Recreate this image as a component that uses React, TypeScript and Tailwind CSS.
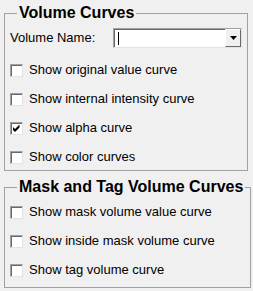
import { useState } from 'react';

const body = { fontFamily: '"Liberation Sans", Arial, sans-serif' };

function CheckRow({ label, checked, onToggle }: { label: string; checked: boolean; onToggle: () => void }) {
  return (
    <label className="flex items-center h-4 gap-[6px] cursor-default select-none" onClick={onToggle}>
      <span className="relative w-[13px] h-[13px] shrink-0 bg-white border border-t-[#a0a0a0] border-l-[#a0a0a0] border-r-[#e3e3e3] border-b-[#e3e3e3] shadow-[inset_1px_1px_0_#696969]">
        {checked && (
          <svg className="absolute left-[1px] top-[1px]" width="9" height="9" viewBox="0 0 9 9">
            <path d="M1 3 L3 5 L7.5 0.5 L7.5 3.5 L3 8 L1 6 Z" fill="#000" />
          </svg>
        )}
      </span>
      <span className="text-[13px] text-black leading-4">{label}</span>
    </label>
  );
}

export default function App() {
  const [checks, setChecks] = useState<Record<string, boolean>>({
    original: false,
    internal: false,
    alpha: true,
    color: false,
    mask: false,
    inside: false,
    tag: false,
  });
  const toggle = (k: string) => setChecks((c) => ({ ...c, [k]: !c[k] }));

  return (
    <div className="w-[253px] h-[291px] bg-[#f0f0f0] px-[4px] pt-[4px] flex flex-col gap-[7px]" style={body}>
      <fieldset className="w-[244px] border border-[#a0a0a0] px-[5px] pb-[5px]">
        <legend className="ml-[7px] px-[2px] text-[16px] leading-[18px] font-bold text-black whitespace-nowrap">Volume Curves</legend>
        <div className="flex items-center h-5 mt-[6px]">
          <span className="text-[13px] text-black w-[103px]">Volume Name:</span>
          <div className="flex w-[129px] h-5 bg-white border border-t-[#a0a0a0] border-l-[#a0a0a0] border-r-[#e3e3e3] border-b-[#e3e3e3] shadow-[inset_1px_1px_0_#696969]">
            <div className="flex-1 flex items-center pl-[4px]">
              <span className="w-px h-[13px] bg-black" />
            </div>
            <div className="w-[16px] h-full bg-[#f0f0f0] border border-t-white border-l-white border-r-[#696969] border-b-[#696969] flex items-center justify-center">
              <svg width="7" height="4" viewBox="0 0 7 4">
                <path d="M0 0 H7 L3.5 4 Z" fill="#000" />
              </svg>
            </div>
          </div>
        </div>
        <div className="flex flex-col gap-[13px] mt-[14px]">
          <CheckRow label="Show original value curve" checked={checks.original} onToggle={() => toggle('original')} />
          <CheckRow label="Show internal intensity curve" checked={checks.internal} onToggle={() => toggle('internal')} />
          <CheckRow label="Show alpha curve" checked={checks.alpha} onToggle={() => toggle('alpha')} />
          <CheckRow label="Show color curves" checked={checks.color} onToggle={() => toggle('color')} />
        </div>
      </fieldset>
      <fieldset className="w-[244px] border border-[#a0a0a0] px-[5px] pb-[9px]">
        <legend className="ml-[7px] px-[2px] text-[16px] leading-[18px] font-bold text-black whitespace-nowrap">Mask and Tag Volume Curves</legend>
        <div className="flex flex-col gap-[13px] mt-[8px]">
          <CheckRow label="Show mask volume value curve" checked={checks.mask} onToggle={() => toggle('mask')} />
          <CheckRow label="Show inside mask volume curve" checked={checks.inside} onToggle={() => toggle('inside')} />
          <CheckRow label="Show tag volume curve" checked={checks.tag} onToggle={() => toggle('tag')} />
        </div>
      </fieldset>
    </div>
  );
}
